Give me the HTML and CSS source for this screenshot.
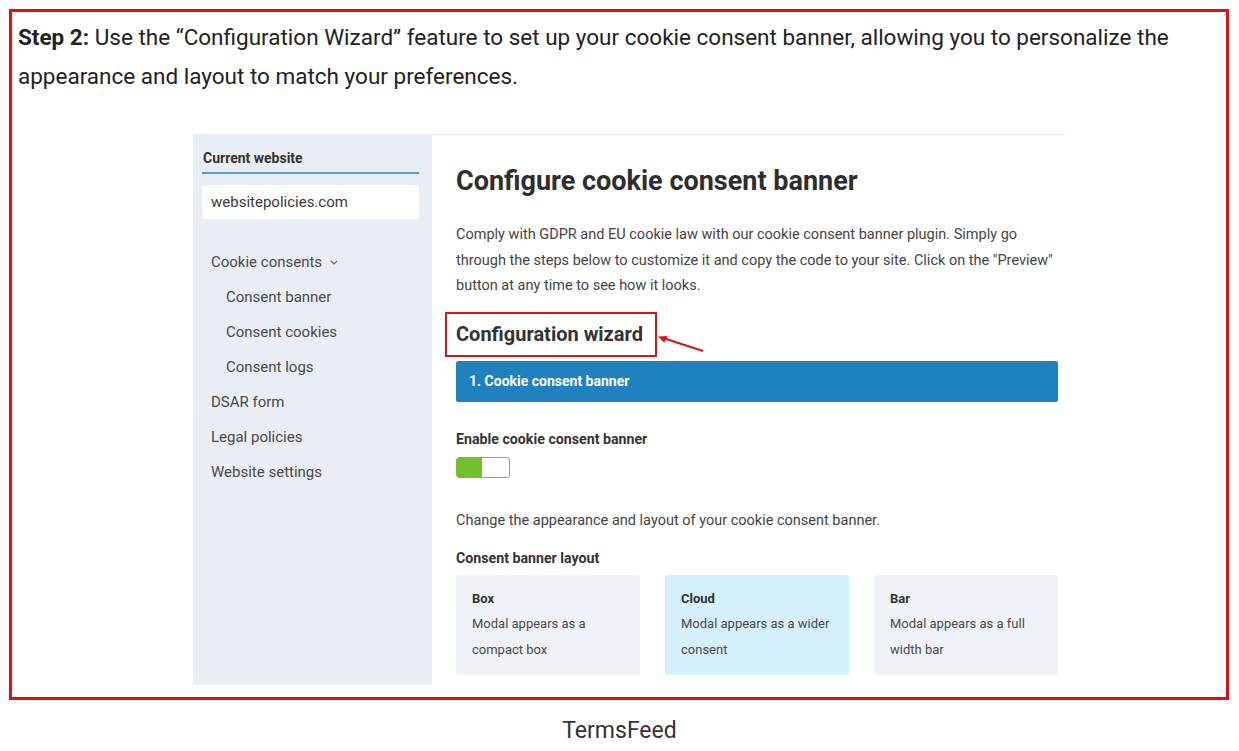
FILE: index.html
```html
<!DOCTYPE html>
<html lang="en">
<head>
	<meta charset="UTF-8">
	<meta name="viewport" content="width=device-width, initial-scale=1">
	<title>Step 2 - Configuration Wizard</title>
	<link rel="stylesheet" href="styles.css">
</head>
<body>
	<div class="step-frame">
		<p class="step-text"><strong>Step 2:</strong> Use the “Configuration Wizard” feature to set up your cookie consent banner, allowing you to personalize the appearance and layout to match your preferences.</p>

		<div class="app-shot">
			<aside class="sidebar">
				<div class="sidebar-label">Current website</div>
				<div class="site-input">websitepolicies.com</div>
				<ul class="nav">
					<li>Cookie consents
						<svg class="chevron" width="8" height="5" viewBox="0 0 8 5"><path d="M1 1l3 3 3-3" fill="none" stroke="#666" stroke-width="1.1"/></svg>
					</li>
					<li class="sub">Consent banner</li>
					<li class="sub">Consent cookies</li>
					<li class="sub">Consent logs</li>
					<li>DSAR form</li>
					<li>Legal policies</li>
					<li>Website settings</li>
				</ul>
			</aside>

			<main class="content">
				<h1>Configure cookie consent banner</h1>
				<p class="intro">Comply with GDPR and EU cookie law with our cookie consent banner plugin. Simply go through the steps below to customize it and copy the code to your site. Click on the "Preview" button at any time to see how it looks.</p>

				<div class="wizard-title">
					<h2>Configuration wizard</h2>
					<svg class="arrow" width="50" height="20" viewBox="0 0 50 20">
						<line x1="48" y1="17" x2="8" y2="4" stroke="#d51414" stroke-width="2"/>
						<path d="M3 2.5l9.5-0.5-3.2 6.8z" fill="#d51414"/>
					</svg>
				</div>

				<div class="step-bar">1. Cookie consent banner</div>

				<div class="field-label">Enable cookie consent banner</div>
				<div class="toggle"><span class="toggle-on"></span></div>

				<p class="note">Change the appearance and layout of your cookie consent banner.</p>

				<div class="field-label layout-label">Consent banner layout</div>
				<div class="layouts">
					<div class="layout-card">
						<div class="card-title">Box</div>
						<div class="card-desc">Modal appears as a compact box</div>
					</div>
					<div class="layout-card selected">
						<div class="card-title">Cloud</div>
						<div class="card-desc">Modal appears as a wider consent</div>
					</div>
					<div class="layout-card">
						<div class="card-title">Bar</div>
						<div class="card-desc">Modal appears as a full width bar</div>
					</div>
				</div>
			</main>
		</div>
	</div>

	<div class="caption">TermsFeed</div>
</body>
</html>
```

FILE: styles.css
```css
:root {
	--frame-red: #e01010;
	--text-color: #222;
	--shot-text: #444;
	--sidebar-bg: #e9edf4;
	--bar-blue: #2180be;
	--toggle-green: #72c02c;
}

body {
	font-family: Roboto, "Liberation Sans", Arial, sans-serif;
	margin: 0;
	padding: 0;
	background-color: #fff;
	color: var(--text-color);
}

.step-frame {
	margin: 9px 0 0 9px;
	border: 3px solid var(--frame-red);
	padding: 6px 0 0 6px;
	width: 1208px;
	height: 679px;
}

.step-text {
	margin: 0;
	font-size: 22.5px;
	line-height: 38.5px;
	color: #222;
}

.step-text strong {
	font-weight: 700;
}

/* product screenshot */
.app-shot {
	display: flex;
	margin: 39px 0 0 175px;
	width: 872px;
	height: 551px;
	color: var(--shot-text);
}

.sidebar {
	width: 239px;
	box-sizing: border-box;
	padding: 14px 13px 0 9px;
	background: var(--sidebar-bg);
	border-radius: 0 0 0 3px;
}

.sidebar-label {
	font-size: 14px;
	font-weight: 700;
	line-height: 20px;
	color: #333;
	padding: 0 0 4px 1px;
	border-bottom: 2px solid #5a9fd4;
}

.site-input {
	margin-top: 11px;
	height: 34px;
	line-height: 34px;
	padding-left: 9px;
	background: #fff;
	border-radius: 3px;
	font-size: 15px;
	color: #3a3a3a;
}

.nav {
	list-style: none;
	margin: 26px 0 0;
	padding: 0;
}

.nav li {
	font-size: 15px;
	line-height: 35px;
	padding-left: 9px;
	color: #4a4a4a;
}

.nav li.sub {
	padding-left: 24px;
}

.chevron {
	margin-left: 4px;
	vertical-align: 2px;
}

.content {
	flex: 1;
	padding: 0 7px 0 24px;
	border-top: 1px solid #e6e6e6;
	background: #fff;
}

.content h1 {
	margin: 30px 0 0;
	font-size: 27px;
	line-height: 32px;
	font-weight: 700;
	color: #2e2e2e;
}

.intro {
	margin: 25px 0 0;
	font-size: 14.5px;
	line-height: 25.5px;
	color: #444;
}

.wizard-title {
	position: relative;
	display: inline-block;
	margin: 13px 0 0 -11px;
	padding: 8px 12px 9px 9px;
	border: 2px solid #d51414;
}

.wizard-title h2 {
	margin: 0;
	font-size: 20px;
	line-height: 24px;
	font-weight: 700;
	color: #333;
}

.arrow {
	position: absolute;
	left: 100%;
	top: 20px;
}

.step-bar {
	margin-top: 4px;
	height: 41px;
	line-height: 41px;
	padding-left: 13px;
	background: var(--bar-blue);
	border-radius: 2px;
	color: #fff;
	font-size: 14px;
	font-weight: 700;
}

.field-label {
	margin-top: 27px;
	font-size: 14.2px;
	line-height: 20px;
	font-weight: 700;
	color: #333;
}

.toggle {
	margin-top: 8px;
	width: 54px;
	height: 21px;
	box-sizing: border-box;
	border: 1.5px solid var(--toggle-green);
	border-radius: 3px;
	background: #fff;
	overflow: hidden;
}

.toggle-on {
	display: block;
	width: 25px;
	height: 100%;
	background: var(--toggle-green);
}

.note {
	margin: 33px 0 0;
	font-size: 14.5px;
	line-height: 20px;
	color: #444;
}

.layout-label {
	margin-top: 17px;
}

.layouts {
	display: grid;
	grid-template-columns: repeat(3, 184px);
	column-gap: 25px;
	margin-top: 7px;
}

.layout-card {
	height: 100px;
	box-sizing: border-box;
	padding: 15px 12px 0 16px;
	background: #eff2f7;
	border-radius: 2px;
	font-size: 13px;
}

.layout-card.selected {
	background: #d3f0fb;
}

.card-title {
	font-weight: 700;
	line-height: 18px;
	color: #333;
	margin-bottom: 3px;
}

.card-desc {
	line-height: 26px;
	color: #4a4a4a;
}

.caption {
	margin-top: 17px;
	text-align: center;
	font-size: 23px;
	line-height: 28px;
	color: #333;
}
```
